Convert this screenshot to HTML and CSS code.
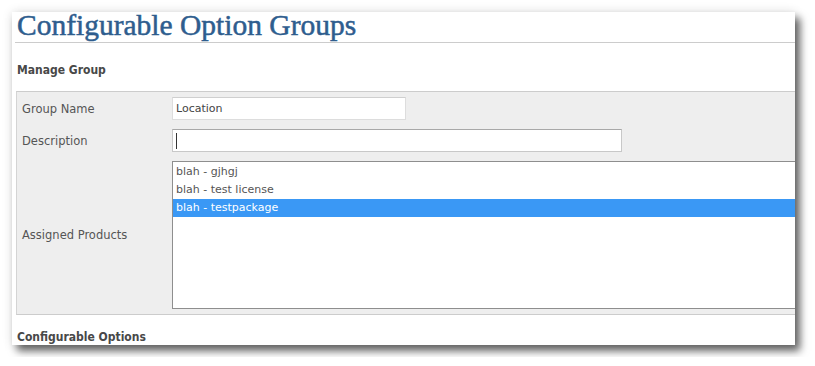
FILE: index.html
```html
<!DOCTYPE html>
<html lang="en">
<head>
  <meta charset="UTF-8">
  <title>Configurable Option Groups</title>
  <link rel="stylesheet" href="styles.css">
</head>
<body>
  <div class="window">
    <h1>Configurable Option Groups</h1>

    <h2>Manage Group</h2>

    <div class="form-table">
      <label class="field-label">Group Name</label>
      <div class="field">
        <input type="text" class="input input-name" value="Location">
      </div>

      <label class="field-label">Description</label>
      <div class="field">
        <input type="text" class="input input-desc focused" value="">
      </div>

      <label class="field-label">Assigned Products</label>
      <div class="field">
        <div class="listbox">
          <div class="option">blah - gjhgj</div>
          <div class="option">blah - test license</div>
          <div class="option selected">blah - testpackage</div>
        </div>
      </div>
    </div>

    <h2 class="options-title">Configurable Options</h2>
  </div>
</body>
</html>
```

FILE: styles.css
```css
body {
  margin: 0;
  padding: 12px;
  background: #fff;
  font-family: 'DejaVu Sans', Verdana, sans-serif;
}

.window {
  display: flow-root;
  width: 780px;
  height: 333px;
  padding-left: 3px;
  background: #fff;
  overflow-x: clip;
  box-shadow: 5px 6px 8px rgba(0, 0, 0, 0.6), 0 0 10px rgba(0, 0, 0, 0.12);
}

h1 {
  margin: -3px 0 0;
  padding: 0 0 0 2px;
  font-family: 'Liberation Serif', 'Times New Roman', serif;
  font-size: 29.5px;
  font-weight: normal;
  line-height: 33px;
  color: #2e5d8e;
  -webkit-text-stroke: 0.5px #2e5d8e;
  border-bottom: 1px solid #cccccc;
}

h2 {
  margin: 20px 0 0 2px;
  font-family: 'DejaVu Sans Condensed', 'DejaVu Sans', sans-serif;
  font-stretch: condensed;
  font-size: 12px;
  font-weight: bold;
  line-height: 14px;
  color: #484848;
}

.form-table {
  display: grid;
  grid-template-columns: 155px 640px;
  row-gap: 9px;
  margin: 14px 0 0 1px;
  padding: 5px 0;
  background: #eeeeee;
  border-top: 1px solid #cccccc;
  border-left: 1px solid #d4d4d4;
  border-bottom: 1px solid #cccccc;
}

.field-label {
  display: flex;
  align-items: center;
  padding-left: 5px;
  font-size: 11.5px;
  color: #555;
}

.field {
  display: flex;
  align-items: center;
}

.input {
  box-sizing: border-box;
  height: 23px;
  margin: 0;
  padding: 0 3px;
  font-family: inherit;
  font-size: 11px;
  color: #444;
  background: #fff;
  border: 1px solid #dddddd;
  border-top-color: #cfcfcf;
  outline: none;
}

.input-name {
  width: 234px;
}

.input-desc {
  width: 450px;
  border-color: #c8c8c8;
  border-top-color: #a8a8a8;
  background: linear-gradient(#333, #333) no-repeat 3px 3px / 1px 16px, #fff;
}

.listbox {
  box-sizing: border-box;
  width: 630px;
  height: 148px;
  padding-top: 1px;
  background: #fff;
  border: 1px solid #8e8e8e;
}

.option {
  height: 18px;
  line-height: 18px;
  padding-left: 3px;
  font-size: 11px;
  color: #555;
}

.option.selected {
  background: #3a98f5;
  color: #fff;
}

.options-title {
  margin-top: 15px;
}
```
